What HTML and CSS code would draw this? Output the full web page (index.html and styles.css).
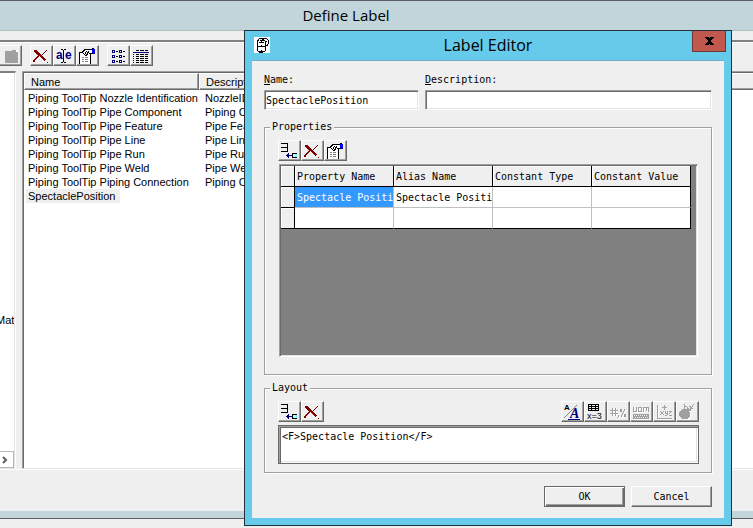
FILE: index.html
```html
<!DOCTYPE html>
<html lang="en">
  <head>
    <meta charset="UTF-8" />
    <meta name="viewport" content="width=device-width, initial-scale=1.0" />
    <title>Define Label</title>
    <link rel="stylesheet" href="styles.css">
  </head>
  <body>
    <!-- shared toolbar icons -->
    <svg class="defs" aria-hidden="true">
      <symbol id="icon-delete" viewBox="0 0 16 16">
        <path d="M1 2h3v1h1v1h1v1h1v1h1v1h1v-1h1v-1h1v-1h1v-1h1v-1h1v1h-1v1h-1v1h-1v1h-1v1h-1v1h1v1h1v1h1v1h1v1h-1v1h-1v-1h-1v-1h-1v-1h-1v-1h-1v-1h-1v1h-1v1h-1v1h-1v1h-1v2h-2v-2h1v-1h1v-1h1v-1h1v-1h1v-1h-1v-1h-1v-1h-1v-1h-1v-1h-1z" fill="#800000" />
        <path d="M14 14h1v1h-1z" fill="#800000" />
      </symbol>
      <symbol id="icon-insert" viewBox="0 0 16 16">
        <path d="M0 .5h7M0 4.5h7M0 8.5h7M6.5 0v9" stroke="#000" />
        <path d="M11 10h5v5h-5z" fill="#7ff" />
        <path d="M12 12.5h1m1 0h1M13 11.5h1M13 13.5h1" stroke="#fff" />
        <path d="M11.5 10v5M11 10.5h5M11 14.5h5" stroke="#000" />
        <path d="M5 12.5h6M6.5 11v3M7.5 10v5" stroke="#000080" />
      </symbol>
      <symbol id="icon-properties" viewBox="0 0 16 16">
        <path d="M1 5h10v11h-10z" fill="#fff" />
        <path d="M5 3l2-2h6v4l-3 1-2 1-3-1z" fill="#fff" />
        <path d="M0 4.5h4M.5 4v12M11.5 6v10M5 1.5h8M4 2.5h2M3 3.5h2M4 5.5h1m1 0h1M5 6.5h1m1 0h2M6 4.5h1m1 0h1M7 3.5h1m1 0h1M8 5.5h1m1 0h4M9 4.5h1M6 7.5h2" stroke="#000" />
        <path d="M3 9.5h2m1 0h3M3 11.5h2m1 0h3M3 13.5h2m1 0h3" stroke="#808080" />
        <path d="M13 1h3v5h-2v-1h-1z" fill="#00f" />
        <path d="M13 .5h2" stroke="#000" />
      </symbol>
    </svg>

    <main class="main-window">
      <h1 class="main-title">Define Label</h1>
      <div class="main-toolbar">
        <div class="tool-group">
          <button class="tool" aria-label="Open" disabled>
            <svg viewBox="0 0 16 16"><path d="M4 4h7l2-2h3v13h-12z" fill="#fff" /><path d="M3 3h6l1-1h4v2h2v11H3z" fill="#a0a0a0" /></svg>
          </button>
        </div>
        <div class="tool-group">
          <button class="tool" aria-label="Delete"><svg><use href="#icon-delete" /></svg></button>
          <button class="tool" aria-label="Rename">
            <svg viewBox="0 0 16 16">
              <text class="icon-text rename" x="0" y="11">a</text>
              <text class="icon-text rename" x="9" y="11">e</text>
              <path d="M5 1.5h2m1 0h2M5 14.5h2m1 0h2M7.5 2v12" stroke="#000" />
            </svg>
          </button>
          <button class="tool" aria-label="Properties"><svg><use href="#icon-properties" /></svg></button>
        </div>
        <div class="tool-group">
          <button class="tool" aria-label="List view">
            <svg viewBox="0 0 16 16">
              <path d="M2.5 2.5h2v2h-2zM9.5 2.5h2v2h-2zM2.5 7.5h2v2h-2zM9.5 7.5h2v2h-2zM2.5 12.5h2v2h-2zM9.5 12.5h2v2h-2z" fill="#fff" stroke="#000080" />
              <path d="M6 3.5h2m5 0h2M6 8.5h2m5 0h2M6 13.5h2m5 0h2" stroke="#000" />
            </svg>
          </button>
          <button class="tool" aria-label="Details view">
            <svg viewBox="0 0 16 16">
              <path d="M3 2.5h3m1 0h4m1 0h3M3 6.5h3m1 0h4m1 0h3M3 8.5h3m1 0h4m1 0h3M3 10.5h3m1 0h4m1 0h3M3 12.5h3m1 0h4m1 0h3M3 14.5h3m1 0h4m1 0h3" stroke="#000" />
              <path d="M0 4.5h16M0 6.5h1M0 8.5h1M0 10.5h1M0 12.5h1M0 14.5h1" stroke="#000080" />
            </svg>
          </button>
        </div>
      </div>

      <div class="panes">
        <div class="tree-pane">
          <div class="tree-item">Mat</div>
          <button class="scroll-right" aria-label="Scroll right">
            <svg viewBox="0 0 6 8"><path d="M1 1l3 3-3 3" fill="none" stroke="#606060" stroke-width="2" /></svg>
          </button>
        </div>
        <div class="list-pane">
          <table class="label-list">
            <thead>
              <tr><th class="name-col">Name</th><th>Description</th></tr>
            </thead>
            <tbody>
              <tr><td>Piping ToolTip Nozzle Identification</td><td>NozzleID</td></tr>
              <tr><td>Piping ToolTip Pipe Component</td><td>Piping Co</td></tr>
              <tr><td>Piping ToolTip Pipe Feature</td><td>Pipe Feat</td></tr>
              <tr><td>Piping ToolTip Pipe Line</td><td>Pipe Line</td></tr>
              <tr><td>Piping ToolTip Pipe Run</td><td>Pipe Run</td></tr>
              <tr><td>Piping ToolTip Pipe Weld</td><td>Pipe Weld</td></tr>
              <tr><td>Piping ToolTip Piping Connection</td><td>Piping Co</td></tr>
              <tr><td><span class="current">SpectaclePosition</span></td><td></td></tr>
            </tbody>
          </table>
        </div>
      </div>
      <div class="main-footer"></div>
    </main>

    <section class="dialog" role="dialog" aria-labelledby="dialogTitle">
      <header class="dialog-title">
        <svg class="app-icon" viewBox="0 0 16 16">
          <path d="M0 0h16v16H0z" fill="#fff" />
          <path d="M5 1.5h8M4 2.5h1M8 2.5h2M13 2.5h1M3 3.5h2M6 3.5h5M14.5 3v4M3.5 4v10M11.5 4v10M5 5.5h5M4 9.5h7M4 14.5h7M5 15.5h4M12 8.5h2M13 7.5h1M7 4.5h1M7 8.5h1M7 13.5h1M12 4.5h1" stroke="#000" fill="none" />
        </svg>
        <h2 id="dialogTitle">Label Editor</h2>
        <button class="close" aria-label="Close">
          <svg viewBox="0 0 9 8"><path d="M0 0h4v1h1V0h4v1H8v1H7v1H6v2h1v1h1v1h1v1H5V7H4v1H0V7h1V6h1V5h1V3H2V2H1V1H0z" fill="#000" /></svg>
        </button>
      </header>

      <form class="dialog-body">
        <div class="fields">
          <div class="field">
            <label for="name"><u>N</u>ame:</label>
            <input type="text" id="name" value="SpectaclePosition" />
          </div>
          <div class="field">
            <label for="description"><u>D</u>escription:</label>
            <input type="text" id="description" />
          </div>
        </div>

        <fieldset class="group properties">
          <legend>Properties</legend>
          <div class="tools">
            <div class="tool-group">
              <button type="button" class="tool" aria-label="Insert property"><svg><use href="#icon-insert" /></svg></button>
              <button type="button" class="tool" aria-label="Delete property"><svg><use href="#icon-delete" /></svg></button>
              <button type="button" class="tool" aria-label="Edit property"><svg><use href="#icon-properties" /></svg></button>
            </div>
          </div>
          <div class="grid-box">
            <table class="grid">
              <thead>
                <tr><th class="row-head"></th><th>Property Name</th><th>Alias Name</th><th>Constant Type</th><th>Constant Value</th></tr>
              </thead>
              <tbody>
                <tr><th class="row-head"></th><td class="selected">Spectacle Position</td><td>Spectacle Position</td><td></td><td></td></tr>
                <tr><th class="row-head"></th><td></td><td></td><td></td><td></td></tr>
              </tbody>
            </table>
          </div>
        </fieldset>

        <fieldset class="group layout">
          <legend>Layout</legend>
          <div class="tools">
            <div class="tool-group">
              <button type="button" class="tool" aria-label="Insert field"><svg><use href="#icon-insert" /></svg></button>
              <button type="button" class="tool" aria-label="Delete field"><svg><use href="#icon-delete" /></svg></button>
            </div>
            <div class="tool-group">
              <button type="button" class="tool" aria-label="Font">
                <svg viewBox="0 0 16 16">
                  <path d="M0 14L13 1" stroke="#808080" />
                  <text class="icon-text font-small" x="0" y="6">A</text>
                  <text class="icon-text font-large" x="6" y="14">A</text>
                  <path d="M4 15.5h12" stroke="#000080" />
                </svg>
              </button>
              <button type="button" class="tool" aria-label="Expression">
                <svg viewBox="0 0 16 16">
                  <path d="M1 0h11v7H1z" fill="#000" />
                  <path d="M2 1.5h2m1 0h3m1 0h2M2 3.5h2m1 0h3m1 0h2M2 5.5h2m1 0h3m1 0h2" stroke="#efefef" />
                  <text class="icon-text small" x="0" y="15">x=3</text>
                </svg>
              </button>
              <button type="button" class="tool" aria-label="Number format" disabled>
                <svg viewBox="0 0 16 16">
                  <path d="M2.5 4v8M5.5 4v8M0 6.5h8M0 9.5h8M8.5 11v2M15 5l-4 8" stroke="#fff" transform="translate(1 1)" />
                  <path d="M2.5 4v8M5.5 4v8M0 6.5h8M0 9.5h8M8.5 11v2M7.5 13v1M15 5l-4 8" stroke="#a0a0a0" fill="none" />
                  <path d="M10 5h2v3h-2zM14 10h2v3h-2z" fill="#a0a0a0" />
                </svg>
              </button>
              <button type="button" class="tool" aria-label="Units of measure" disabled>
                <svg viewBox="0 0 16 16">
                  <path d="M.5 3v4.5h3V3M5.5 3.5h3v4h-3zM10.5 8V3.5h5V8M13 4v3" fill="none" stroke="#fff" transform="translate(1 1)" />
                  <path d="M.5 3v4.5h3V3M5.5 3.5h3v4h-3zM10.5 8V3.5h5V8M13 4v3" fill="none" stroke="#a0a0a0" />
                  <path d="M0 10h16v5H0z" fill="#a0a0a0" />
                  <path d="M1 11.5h14M2 13.5h14" stroke="#efefef" stroke-dasharray="1 1" />
                  <path d="M1 15.5h15" stroke="#fff" />
                </svg>
              </button>
              <button type="button" class="tool" aria-label="Coordinates" disabled>
                <svg viewBox="0 0 16 16">
                  <path d="M2.5 2v12M2 15.5h14" stroke="#fff" />
                  <path d="M1.5 1v14M1 14.5h15M6 3.5h5M8.5 1v5" stroke="#a0a0a0" />
                  <path d="M4 7.5h1m2 0h1M5 8.5h2M5 9.5h2M4 10.5h1m2 0h1M9.5 7v2M11.5 7v4M9 9.5h3M9 11.5h2M13 7.5h3M14 8.5h1M13 9.5h1M13 11h3" stroke="#a0a0a0" />
                </svg>
              </button>
              <button type="button" class="tool" aria-label="Evaluate" disabled>
                <svg viewBox="0 0 16 16">
                  <path d="M3 5h5l1-1 2 2-1 1 1 2v3l-2 3H4l-3-3V8z" fill="#fff" transform="translate(1 1)" />
                  <path d="M3 5h5l1-1 2 2-1 1 1 2v3l-2 3H3l-3-3V8z" fill="#a0a0a0" />
                  <path d="M5.5 0v5M6 2.5h2M8.5 3v2M10 2.5h2M11 3.5h2M12 4.5h2M14.5 0v1M13.5 1v2M11.5 4v3M10.5 5v2" stroke="#a0a0a0" />
                </svg>
              </button>
            </div>
          </div>
          <textarea class="layout-text" aria-label="Layout">&lt;F&gt;Spectacle Position&lt;/F&gt;</textarea>
        </fieldset>

        <div class="actions">
          <button type="button" class="btn default">OK</button>
          <button type="button" class="btn">Cancel</button>
        </div>
      </form>
    </section>
  </body>
</html>
```
FILE: styles.css
```css
* {
  box-sizing: border-box;
}

body {
  margin: 0;
  height: 100vh;
  padding-bottom: 9px;
  overflow: hidden;
  background-color: #efefef;
  font-family: "Liberation Sans", Arial, sans-serif;
  font-size: 11px;
  color: #000;
}

button,
input,
textarea {
  font: inherit;
  color: inherit;
  border-radius: 0;
  margin: 0;
}

h1,
h2 {
  margin: 0;
  font-family: "Open Sans", sans-serif;
  font-size: 15px;
  font-weight: normal;
  line-height: 29px;
  text-align: center;
}

h2 {
  font-size: 16px;
}

.defs {
  display: none;
}

svg {
  display: block;
  width: 16px;
  height: 16px;
  shape-rendering: crispEdges;
}

/* main window */
.main-window {
  display: flex;
  flex-direction: column;
  height: 100%;
  border-top: 1px solid #5c5f68;
  border-bottom: 1px solid #5c5f68;
  background-color: #efefef;
}

.main-title {
  height: 30px;
  padding-right: 61px;
  background-color: #c1d5db;
  border-bottom: 1px solid #b2c0c4;
}

.main-toolbar {
  display: flex;
  gap: 8px;
  margin-top: 9px;
  margin-left: -1px;
  padding: 3px 0 5px;
  border-top: 2px solid #808080;
  box-shadow: inset 0 1px #fff;
}

.tool-group {
  display: flex;
}

.tool {
  width: 23px;
  height: 21px;
  padding: 2px;
  background-color: #efefef;
  border: 1px solid;
  border-color: #fff #696969 #696969 #fff;
  box-shadow: inset -1px -1px #a0a0a0;
}

.icon-text {
  font-family: "Liberation Sans", Arial, sans-serif;
  font-weight: bold;
}

.rename {
  font-size: 12px;
  fill: #000080;
}

.font-small {
  font-size: 8px;
}

.font-large {
  font-family: "Liberation Serif", serif;
  font-size: 14px;
  font-style: italic;
  fill: #000080;
}

.small {
  font-size: 9px;
  font-weight: normal;
}

.panes {
  display: flex;
  flex: 1;
  gap: 6px;
  min-height: 0;
}

.tree-pane {
  display: flex;
  flex-direction: column;
  justify-content: space-between;
  width: 16px;
  overflow: hidden;
  background-color: #fff;
  border: 1px solid #fff;
  border-top: 2px solid #808080;
  border-left: none;
  border-bottom-color: #e3e3e3;
  box-shadow: inset -1px 0 #e3e3e3;
}

.tree-item {
  margin-top: 240px;
  width: 14px;
  overflow: hidden;
  text-indent: -4px;
  line-height: 14px;
}

.scroll-right {
  display: flex;
  align-items: center;
  width: 14px;
  height: 17px;
  padding: 0 0 0 2px;
  background-color: #fff;
  border: 1px solid #b8b8b8;
  border-left: none;
}

.scroll-right svg {
  width: 6px;
  height: 8px;
  shape-rendering: auto;
}

.list-pane {
  flex: 1;
  overflow: hidden;
  background-color: #fff;
  border: 1px solid #a0a0a0;
  border-right: none;
  border-bottom-color: #e3e3e3;
  box-shadow: inset 1px 1px #696969;
  padding: 1px 0 0 1px;
}

.label-list {
  width: 100%;
  table-layout: fixed;
  border-spacing: 0;
  line-height: 14px;
}

.label-list th {
  height: 17px;
  padding: 0 6px;
  font-weight: normal;
  text-align: left;
  background-color: #efefef;
  border: 1px solid;
  border-color: #fff #696969 #696969 #fff;
  box-shadow: inset -1px -1px #a0a0a0;
}

.label-list th:last-child {
  border-right: none;
  box-shadow: inset 0 -1px #a0a0a0;
}

.label-list .name-col {
  width: 175px;
}

.label-list td {
  height: 14px;
  padding: 0 4px;
  white-space: nowrap;
}

.label-list td + td {
  padding-left: 6px;
}

.label-list tbody tr:first-child td {
  padding-top: 1px;
}

.current {
  display: inline-block;
  margin-left: -2px;
  padding: 0 5px 0 2px;
  background-color: #efefef;
}

.main-footer {
  height: 49px;
  border-top: 1px solid #fff;
  border-bottom: 7px solid #c1d5db;
}

/* label editor */
.dialog {
  position: absolute;
  top: 30px;
  left: 244px;
  right: 21px;
  background-color: #66caea;
  border: 1px solid #25313a;
  font-family: "DejaVu Sans Mono", monospace;
  font-size: 10px;
}

.dialog-title {
  display: grid;
  grid-template-columns: 1fr auto 1fr;
  height: 30px;
  padding: 0 5px;
}

.app-icon {
  margin: 6px 0 0 4px;
}

.close {
  display: flex;
  align-items: center;
  justify-content: center;
  justify-self: end;
  width: 34px;
  height: 21px;
  padding: 0;
  background-color: #c1584e;
  border: 1px solid #6b3836;
  border-top: none;
}

.close svg {
  width: 9px;
  height: 8px;
}

.dialog-body {
  margin: 0 7px 7px;
  padding: 12px 12px 11px;
  background-color: #efefef;
  box-shadow: 0 -1px #6fa9cb;
}

.fields {
  display: grid;
  grid-template-columns: 155px 1fr;
  gap: 6px;
  margin-bottom: 11px;
}

.field label {
  display: block;
  margin-bottom: 3px;
  line-height: 14px;
}

.field input {
  display: block;
  width: 100%;
  height: 20px;
  padding: 0 1px;
  background-color: #fff;
  border: 1px solid;
  border-color: #a0a0a0 #fff #fff #a0a0a0;
  box-shadow: inset 1px 1px #696969, inset -1px -1px #e3e3e3;
}

.group {
  min-width: 0;
  margin: 0 0 7px;
  padding: 7px 12px 17px 13px;
  border: 1px solid #a0a0a0;
  box-shadow: 1px 1px #fff, inset 1px 1px #fff;
}

.group legend {
  margin-left: -8px;
  padding: 0 2px;
  line-height: 12px;
  background-color: #efefef;
}

.tools {
  display: flex;
  justify-content: space-between;
}

.grid-box {
  height: 193px;
  margin: 3px 1px 0;
  background-color: #808080;
  border: 1px solid;
  border-color: #a0a0a0 #fff #fff #a0a0a0;
  box-shadow: inset 1px 1px #696969, inset -1px -1px #e3e3e3;
  padding: 1px;
}

.grid {
  width: 410px;
  table-layout: fixed;
  border-spacing: 0;
}

.grid th,
.grid td {
  height: 21px;
  padding: 1px 0 0 2px;
  overflow: hidden;
  font-weight: normal;
  text-align: left;
  white-space: nowrap;
  line-height: 18px;
  border: 0 solid #c0c0c0;
  border-width: 0 1px 1px 0;
}

.grid th {
  background-color: #efefef;
  border-color: #000;
  box-shadow: inset 1px 1px #fff;
}

.grid td {
  background-color: #fff;
}

.grid .row-head {
  width: 14px;
}

.grid .selected {
  background-color: #3399ff;
  color: #fff;
}

.grid td:last-child {
  border-right-color: #000;
}

.grid tr:last-child td {
  border-bottom-color: #000;
}

.layout {
  margin-bottom: 13px;
  padding-bottom: 8px;
}

.layout-text {
  display: block;
  width: 100%;
  height: 39px;
  margin-top: 3px;
  padding: 5px 3px;
  resize: none;
  background-color: #fff;
  border: 1px solid #696969;
  box-shadow: inset 1px 1px #a0a0a0, inset 2px 2px #696969, inset -1px -1px #fff, inset -2px -2px #e3e3e3;
}

.actions {
  display: flex;
  justify-content: flex-end;
  gap: 6px;
}

.btn {
  width: 81px;
  height: 21px;
  padding: 0;
  background-color: #efefef;
  border: 1px solid;
  border-color: #fff #696969 #696969 #fff;
  box-shadow: inset -1px -1px #a0a0a0;
}

.btn.default {
  border-color: #696969;
  box-shadow: inset 1px 1px #fff, inset -1px -1px #696969, inset -2px -2px #a0a0a0;
}
```
